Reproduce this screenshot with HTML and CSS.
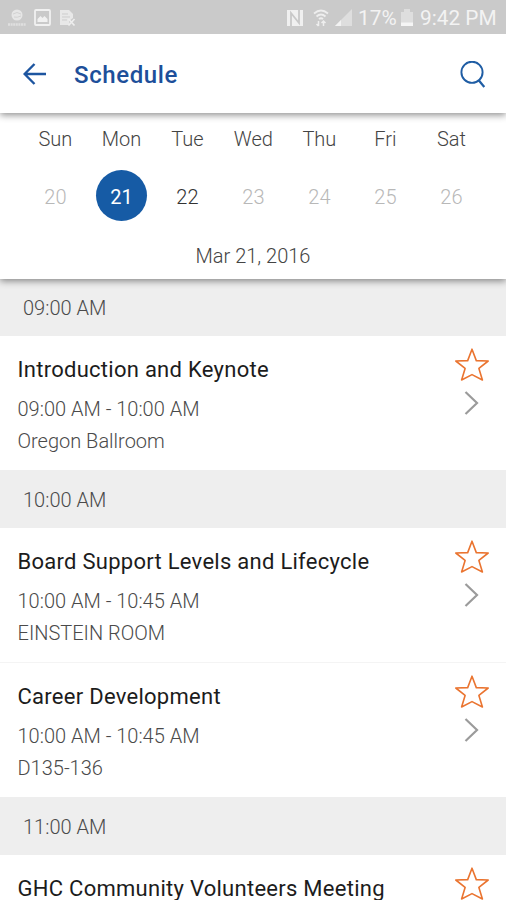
FILE: index.html
```html
<!DOCTYPE html>
<html lang="en">
<head>
<meta charset="utf-8">
<title>Schedule</title>
<link rel="stylesheet" href="styles.css">
</head>
<body>
<svg class="defs" width="0" height="0" aria-hidden="true">
  <symbol id="star" viewBox="0 0 36 36"><path d="M18 2.200 22.300 13.600 34.200 14 24.900 21.400 28.400 33 18 27.600 7.600 33 11.100 21.400 1.800 14 13.700 13.600Z" fill="none" stroke="#ea7430" stroke-width="1.600" stroke-linejoin="round"/></symbol>
  <symbol id="chevron" viewBox="0 0 16 26"><path d="M1.500 2 13 13 1.500 24" fill="none" stroke="#9b9b9b" stroke-width="2.200"/></symbol>
</svg>
<div class="status">
  <div class="notes">
    <svg width="20" height="18" viewBox="0 0 20 18"><circle cx="10" cy="6" r="5.500" fill="#e6e6e6"/><path d="M6 5q4-3 8 0M7 8q3 1 7-1" stroke="#d2d2d2" fill="none"/><path d="M1 15.500H19" stroke="#dfdfdf" stroke-width="2.500" stroke-dasharray="2 .6"/></svg>
    <svg width="17" height="17" viewBox="0 0 17 17"><rect x="1" y="1" width="15" height="15" rx="1" fill="none" stroke="#f1f1f1" stroke-width="1.800"/><path d="M3.500 13V10l3-3 2 2 2-2 3 3v3Z" fill="#f1f1f1"/></svg>
    <svg width="17" height="17" viewBox="0 0 17 17"><path d="M1 1h9l4 4v4l-4 3 1 4H1Z" fill="#e8e8e8"/><path d="M3 5h6M3 8h8M3 11h5" stroke="#cdcdcd"/><path d="m9.500 10 6 6.500m0-6.500-6 6.500" stroke="#eee" stroke-width="1.600"/></svg>
  </div>
  <div class="state">
    <svg class="nfc" width="18" height="18" viewBox="0 0 18 18"><path d="M1 1h16v16H1Z" fill="#f0f0f0"/><path d="M5 17V4l8 10V1" fill="none" stroke="#c8c8c8" stroke-width="1.800"/></svg>
    <svg class="wifi" width="16" height="18" viewBox="0 0 16 18"><path d="M1 4.500q7-6 14 0M3.500 7.500q4.500-4 9 0M6 10q2-1.600 4 0" fill="none" stroke="#eee" stroke-width="1.800"/><path d="M5.500 17v-5m-2 3 2 2M10.500 12v5m-2-3 2-2 2 2" fill="none" stroke="#eee" stroke-width="1.500"/></svg>
    <svg class="signal" width="17" height="17" viewBox="0 0 17 17"><path d="M0 17 17 0V17Z" fill="#dedede"/><path d="M0 17 6 11V17Z" fill="#f2f2f2"/></svg>
    <span class="percent">17%</span>
    <svg class="battery" width="12" height="17" viewBox="0 0 12 17"><path d="M0 3h3V0h6v3h3v14H0Z" fill="#dedede"/><path d="M0 13.500h12V17H0Z" fill="#f5f5f5"/></svg>
    <span class="clock">9:42 PM</span>
  </div>
</div>
<header class="bar">
  <svg class="back" width="24" height="24" viewBox="0 0 24 24"><path d="M11.500 1 1.600 11 11.500 21M2 11H23" fill="none" stroke="#1d55a0" stroke-width="2.400"/></svg>
  <h1>Schedule</h1>
  <svg class="search" width="26" height="28" viewBox="0 0 26 28"><circle cx="12" cy="11.300" r="10.600" fill="none" stroke="#1f5da4" stroke-width="1.900"/><path d="m18.500 19 5.800 7" stroke="#1f5da4" stroke-width="2.200"/></svg>
</header>
<section class="calendar">
  <div class="week names"><span>Sun</span><span>Mon</span><span>Tue</span><span>Wed</span><span>Thu</span><span>Fri</span><span>Sat</span></div>
  <div class="week days"><span>20</span><span class="selected">21</span><span class="open">22</span><span>23</span><span>24</span><span>25</span><span>26</span></div>
  <div class="date">Mar 21, 2016</div>
</section>
<main>
  <h2 class="first">09:00 AM</h2>
  <article>
    <div class="info"><h3>Introduction and Keynote</h3><p>09:00 AM - 10:00 AM</p><p>Oregon Ballroom</p></div>
    <div class="actions"><svg class="star"><use href="#star"/></svg><svg class="chevron"><use href="#chevron"/></svg></div>
  </article>
  <h2>10:00 AM</h2>
  <article>
    <div class="info"><h3>Board Support Levels and Lifecycle</h3><p>10:00 AM - 10:45 AM</p><p>EINSTEIN ROOM</p></div>
    <div class="actions"><svg class="star"><use href="#star"/></svg><svg class="chevron"><use href="#chevron"/></svg></div>
  </article>
  <article class="divided">
    <div class="info"><h3>Career Development</h3><p>10:00 AM - 10:45 AM</p><p>D135-136</p></div>
    <div class="actions"><svg class="star"><use href="#star"/></svg><svg class="chevron"><use href="#chevron"/></svg></div>
  </article>
  <h2>11:00 AM</h2>
  <article class="last">
    <div class="info"><h3>GHC Community Volunteers Meeting</h3></div>
    <div class="actions"><svg class="star"><use href="#star"/></svg></div>
  </article>
</main>
</body>
</html>
```
FILE: styles.css
```css
* { box-sizing: border-box; margin: 0; padding: 0; }
html, body { height: 900px; overflow: hidden; }
body { width: 506px; background: #fff; font-family: Roboto, sans-serif; display: flex; flex-direction: column; }
svg { display: block; flex: none; }
.defs { position: absolute; }
.status { height: 34px; flex: none; background: #cacaca; color: #f3f3f3; display: flex; justify-content: space-between; align-items: center; padding: 1px 7px 0 7px; font-size: 20.8px; position: relative; z-index: 3; }
.notes, .state { display: flex; align-items: center; }
.notes { gap: 7px; }
.notes svg:last-child { margin-left: 1px; }
.wifi { margin-left: 9px; }
.signal { margin-left: 6px; }
.percent { margin-left: 6px; width: 39px; white-space: nowrap; }
.battery { margin-left: 4px; }
.clock { margin-left: 7px; width: 79px; white-space: nowrap; }
.bar { height: 79px; flex: none; background: #fff; display: flex; align-items: center; padding: 2px 20px 0 23px; position: relative; z-index: 2; box-shadow: 0 2px 7px rgba(0,0,0,.45); }
.bar h1 { margin-left: 27px; font-size: 24px; font-weight: 500; color: #1d4f9a; line-height: 28px; letter-spacing: .6px; }
.search { margin-left: auto; }
.calendar { height: 166px; flex: none; background: #fff; position: relative; z-index: 1; box-shadow: 0 2px 7px rgba(0,0,0,.45); padding: 13px 22px 0; color: #444; font-size: 20px; font-weight: 300; }
.week { display: grid; grid-template-columns: repeat(7, 66px); text-align: center; padding-left: .4px; }
.names { line-height: 26px; }
.days { margin-top: 18px; line-height: 54px; height: 51px; color: #b8b8b8; }
.days .open { color: #333; }
.days .selected { width: 51px; height: 51px; border-radius: 50%; background: #165ba5; color: #fff; justify-self: center; font-weight: 400; }
.date { text-align: center; margin-top: 22px; line-height: 26px; }
main { flex: 1; min-height: 0; overflow: hidden; }
h2 { height: 58px; background: #eee; color: #4a4a4a; font-size: 20px; font-weight: 300; line-height: 60px; padding-left: 23px; }
h2.first { height: 57px; line-height: 59px; }
article { height: 134px; display: flex; justify-content: space-between; padding: 11px 16px 0 17.5px; }
article.divided { height: 135px; border-top: 1px solid #f4f4f4; }
article.last { height: 45px; overflow: hidden; }
h3 { font-size: 22px; font-weight: 400; color: #1c1c1c; letter-spacing: .27px; line-height: 45px; white-space: nowrap; }
p { font-size: 20px; font-weight: 300; color: #4a4a4a; line-height: 32px; }
h3 + p { margin-top: 1px; }
.actions { width: 36px; display: flex; flex-direction: column; align-items: center; }
.star { width: 36px; height: 36px; }
.chevron { width: 16px; height: 26px; margin-top: 7px; }
```
